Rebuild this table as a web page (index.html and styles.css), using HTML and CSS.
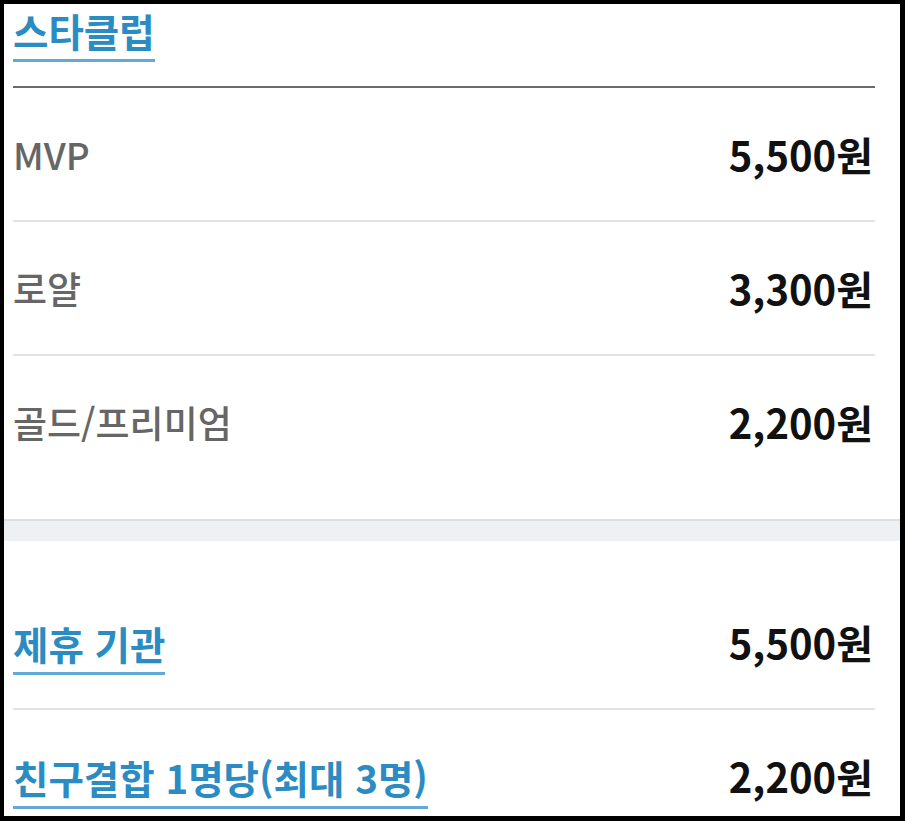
FILE: index.html
```html
<!DOCTYPE html>
<html lang="ko">
<head>
<meta charset="utf-8">
<link rel="stylesheet" href="styles.css">
</head>
<body>
<div class="frame">
  <section class="group">
    <div class="group-head">
      <a class="link title">스타클럽</a>
    </div>
    <div class="row">
      <span class="label">MVP</span>
      <span class="price">5,500원</span>
    </div>
    <div class="row">
      <span class="label">로얄</span>
      <span class="price">3,300원</span>
    </div>
    <div class="row last">
      <span class="label">골드/프리미엄</span>
      <span class="price">2,200원</span>
    </div>
  </section>
  <div class="band"></div>
  <section class="group second">
    <div class="row">
      <a class="link">제휴 기관</a>
      <span class="price">5,500원</span>
    </div>
    <div class="row">
      <a class="link">친구결합 1명당(최대 3명)</a>
      <span class="price">2,200원</span>
    </div>
  </section>
</div>
</body>
</html>
```

FILE: styles.css
```css
html, body {
  margin: 0;
  padding: 0;
  background: #fff;
}
body {
  font-family: "Noto Sans CJK KR", "Noto Sans", sans-serif;
}
.frame {
  box-sizing: border-box;
  width: 905px;
  height: 821px;
  border-style: solid;
  border-color: #000;
  border-width: 4px 5px 5px 4px;
  overflow: hidden;
  background: #fff;
}
.group {
  padding: 0 25px 31px 9px;
}
.group-head {
  border-bottom: 2px solid #6b6b6b;
  height: 82px;
}
.link {
  display: inline-block;
  color: #2a8cc2;
  font-weight: 700;
  font-size: 38.5px;
  line-height: 46px;
  padding-bottom: 6px;
  border-bottom: 3px solid #62aad5;
}
.title {
  margin-top: 3px;
}
.row {
  display: flex;
  justify-content: space-between;
  align-items: center;
  height: 132px;
  border-bottom: 2px solid #e3e3e3;
}
.row.last {
  border-bottom: none;
}
.label {
  font-family: "Noto Sans CJK KR Medium", "Noto Sans CJK KR", "Noto Sans", sans-serif;
  color: #666;
  font-size: 37px;
  font-weight: 500;
}
.price {
  color: #111;
  font-size: 40px;
  font-weight: 700;
  padding-right: 2px;
}
.band {
  height: 20px;
  background: #eef1f4;
  border-top: 2px solid #dcdfe2;
}
.group.second {
  padding-top: 35px;
}
.second .row .link {
  margin-top: 10px;
}
```
